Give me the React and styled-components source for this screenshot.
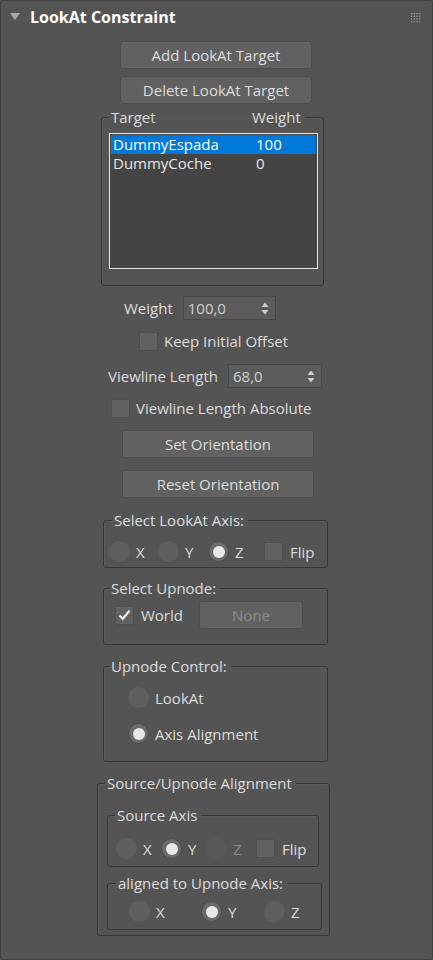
import styled, { createGlobalStyle } from "styled-components";

const GlobalStyle = createGlobalStyle`
  html, body {
    margin: 0;
    padding: 0;
    background: #545454;
  }
`;

const Panel = styled.div`
  box-sizing: border-box;
  width: 433px;
  height: 960px;
  background: #545454;
  border: 1px solid #3f3f3f;
  border-radius: 3px;
  font-family: "Open Sans", "Liberation Sans", sans-serif;
  font-size: 15px;
  line-height: 20px;
  color: #dcdcdc;
  overflow: hidden;
`;

const Header = styled.div`
  height: 33px;
  display: flex;
  align-items: center;
  padding-left: 9px;
  padding-right: 11px;
`;

const Arrow = styled.span`
  width: 0;
  height: 0;
  border-left: 5px solid transparent;
  border-right: 5px solid transparent;
  border-top: 7px solid #a8a8a8;
  margin-right: 10px;
  margin-top: -2px;
`;

const Title = styled.h1`
  flex: 1;
  margin: 0;
  font-size: 16px;
  font-weight: 700;
  color: #ffffff;
  margin-top: -2px;
`;

const Body = styled.div`
  display: flex;
  flex-direction: column;
  align-items: flex-start;
`;

const Button = styled.button`
  box-sizing: border-box;
  width: ${(p) => p.$w || 192}px;
  height: 28px;
  margin: ${(p) => p.$top || 0}px 0 0 ${(p) => p.$left || 0}px;
  border: 1px solid #4c4c4c;
  border-radius: 3px;
  background: #616161;
  color: ${(p) => (p.disabled ? "#8c8c8c" : "#dcdcdc")};
  font-family: inherit;
  font-size: 15px;
  padding: 0;
  cursor: pointer;
`;

const Group = styled.fieldset`
  box-sizing: border-box;
  width: ${(p) => p.$w}px;
  margin: ${(p) => p.$top || 0}px 0 0 ${(p) => p.$left || 0}px;
  padding: ${(p) => p.$pad};
  border: 1px solid #363636;
  border-radius: 3px;
  box-shadow: inset 1px 1px 0 rgba(255, 255, 255, 0.05);
  min-width: 0;
`;

const Legend = styled.legend`
  padding: 0 ${(p) => p.$pr || 4}px 0 ${(p) => p.$pl || 2}px;
  margin-left: ${(p) => p.$ml || 0}px;
  line-height: 18px;
  white-space: nowrap;
`;

const LegendCol = styled.span`
  display: inline-block;
  width: ${(p) => p.$w}px;
`;

const ListBox = styled.div`
  box-sizing: border-box;
  width: 209px;
  height: 136px;
  background: #444444;
  border: 1px solid #e6e6e6;
  padding: 1px;
`;

const ListRow = styled.div`
  display: flex;
  height: 19px;
  line-height: 19px;
  padding-left: 2px;
  background: ${(p) => (p.$selected ? "#0078d7" : "transparent")};
  color: ${(p) => (p.$selected ? "#ffffff" : "#e6e6e6")};
`;

const ListCell = styled.span`
  width: ${(p) => p.$w}px;
`;

const Row = styled.div`
  display: flex;
  align-items: center;
  margin: ${(p) => p.$top || 0}px 0 0 ${(p) => p.$left || 0}px;
  gap: ${(p) => p.$gap || 0}px;
`;

const Label = styled.span`
  color: ${(p) => (p.$disabled ? "#8a8a8a" : "#dcdcdc")};
`;

const Spinner = styled.div`
  box-sizing: border-box;
  width: ${(p) => p.$w}px;
  height: 24px;
  display: flex;
  align-items: center;
  justify-content: space-between;
  padding: 0 6px 0 4px;
  background: #5b5b5b;
  border: 1px solid #484848;
  color: #cfcfcf;
`;

const Box = styled.span`
  box-sizing: border-box;
  width: 19px;
  height: 19px;
  flex: none;
  display: inline-flex;
  align-items: center;
  justify-content: center;
  background: #616161;
  border: 1px solid #4e4e4e;
`;

const Radio = styled.span`
  box-sizing: border-box;
  width: 21px;
  height: 21px;
  flex: none;
  border-radius: 50%;
  display: inline-flex;
  align-items: center;
  justify-content: center;
  background: ${(p) =>
    p.$disabled ? "#585858" : p.$on ? "#6a6a6a" : "#5f5f5f"};
  border: 1px solid ${(p) => (p.$on ? "#4a4a4a" : "transparent")};
  &::after {
    content: "";
    display: ${(p) => (p.$on ? "block" : "none")};
    width: 12px;
    height: 12px;
    border-radius: 50%;
    background: #e8e8e8;
  }
`;

const Option = styled.span`
  display: inline-flex;
  align-items: center;
  width: ${(p) => (p.$w ? `${p.$w}px` : "auto")};
  gap: ${(p) => p.$gap || 6}px;
`;

function Grip() {
  const dots = [];
  for (let r = 0; r < 4; r++)
    for (let c = 0; c < 4; c++)
      dots.push(<rect key={r * 4 + c} x={c * 2.7} y={r * 2.7} width="1.2" height="1.2" fill="#a0a0a0" />);
  return (
    <svg width="10" height="10" viewBox="0 0 10 10">
      {dots}
    </svg>
  );
}

function SpinArrows() {
  return (
    <svg width="8" height="13" viewBox="0 0 8 13">
      <path d="M4 0.5 L7.5 5 L0.5 5 Z" fill="#cfcfcf" />
      <path d="M4 12.5 L7.5 8 L0.5 8 Z" fill="#cfcfcf" />
    </svg>
  );
}

function Check() {
  return (
    <svg width="13" height="12" viewBox="0 0 13 12">
      <path d="M1.5 6.5 L4.8 9.8 L11.5 1.8" stroke="#f0f0f0" strokeWidth="2.2" fill="none" />
    </svg>
  );
}

function RadioOpt({ w, on, disabled, children }) {
  return (
    <Option $w={w}>
      <Radio $on={on} $disabled={disabled} />
      <Label $disabled={disabled}>{children}</Label>
    </Option>
  );
}

function CheckOpt({ checked, gap = 6, children }) {
  return (
    <Option $gap={gap}>
      <Box>{checked && <Check />}</Box>
      <Label>{children}</Label>
    </Option>
  );
}

export default function App() {
  return (
    <>
      <GlobalStyle />
      <Panel>
        <Header>
          <Arrow />
          <Title>LookAt Constraint</Title>
          <Grip />
        </Header>
        <Body>
          <Button $top={7} $left={119}>Add LookAt Target</Button>
          <Button $top={7} $left={119}>Delete LookAt Target</Button>

          <Group $w={223} $top={4} $left={100} $pad="7px 5px 16px 7px">
            <Legend $pl={2} $pr={4}>
              <LegendCol $w={141}>Target</LegendCol>
              Weight
            </Legend>
            <ListBox>
              <ListRow $selected>
                <ListCell $w={143}>DummyEspada</ListCell>
                <ListCell>100</ListCell>
              </ListRow>
              <ListRow>
                <ListCell $w={143}>DummyCoche</ListCell>
                <ListCell>0</ListCell>
              </ListRow>
            </ListBox>
          </Group>

          <Row $top={10} $left={123} $gap={10}>
            <Label>Weight</Label>
            <Spinner $w={93}>
              <span>100,0</span>
              <SpinArrows />
            </Spinner>
          </Row>
          <Row $top={11} $left={138}>
            <CheckOpt>Keep Initial Offset</CheckOpt>
          </Row>
          <Row $top={13} $left={107} $gap={10}>
            <Label>Viewline Length</Label>
            <Spinner $w={94}>
              <span>68,0</span>
              <SpinArrows />
            </Spinner>
          </Row>
          <Row $top={10} $left={110}>
            <CheckOpt>Viewline Length Absolute</CheckOpt>
          </Row>

          <Button $top={12} $left={121}>Set Orientation</Button>
          <Button $top={12} $left={121}>Reset Orientation</Button>

          <Group $w={225} $top={13} $left={102} $pad="12px 5px 5px 5px">
            <Legend $ml={3}>Select LookAt Axis:</Legend>
            <Row>
              <RadioOpt w={49}>X</RadioOpt>
              <RadioOpt w={50}>Y</RadioOpt>
              <RadioOpt w={56} on>Z</RadioOpt>
              <CheckOpt gap={7}>Flip</CheckOpt>
            </Row>
          </Group>

          <Group $w={225} $top={11} $left={102} $pad="4px 5px 15px 11px">
            <Legend $ml={-6}>Select Upnode:</Legend>
            <Row>
              <CheckOpt checked gap={7}>World</CheckOpt>
              <Button disabled $w={104} $left={16}>None</Button>
            </Row>
          </Group>

          <Group $w={225} $top={12} $left={102} $pad="12px 5px 17px 24px">
            <Legend $ml={-19}>Upnode Control:</Legend>
            <Row>
              <RadioOpt>LookAt</RadioOpt>
            </Row>
            <Row $top={15}>
              <RadioOpt on>Axis Alignment</RadioOpt>
            </Row>
          </Group>

          <Group $w={233} $top={12} $left={96} $pad="14px 9px 5px 9px">
            <Legend $ml={-2}>Source/Upnode Alignment</Legend>
            <Group $w={212} $pad="14px 5px 7px 8px">
              <Legend $ml={-1}>Source Axis</Legend>
              <Row>
                <RadioOpt w={45}>X</RadioOpt>
                <RadioOpt w={45} on>Y</RadioOpt>
                <RadioOpt w={50} disabled>Z</RadioOpt>
                <CheckOpt gap={7}>Flip</CheckOpt>
              </Row>
            </Group>
            <Group $w={215} $top={7} $pad="9px 5px 7px 21px">
              <Legend $ml={-13}>aligned to Upnode Axis:</Legend>
              <Row>
                <RadioOpt w={72}>X</RadioOpt>
                <RadioOpt w={63} on>Y</RadioOpt>
                <RadioOpt>Z</RadioOpt>
              </Row>
            </Group>
          </Group>
        </Body>
      </Panel>
    </>
  );
}
